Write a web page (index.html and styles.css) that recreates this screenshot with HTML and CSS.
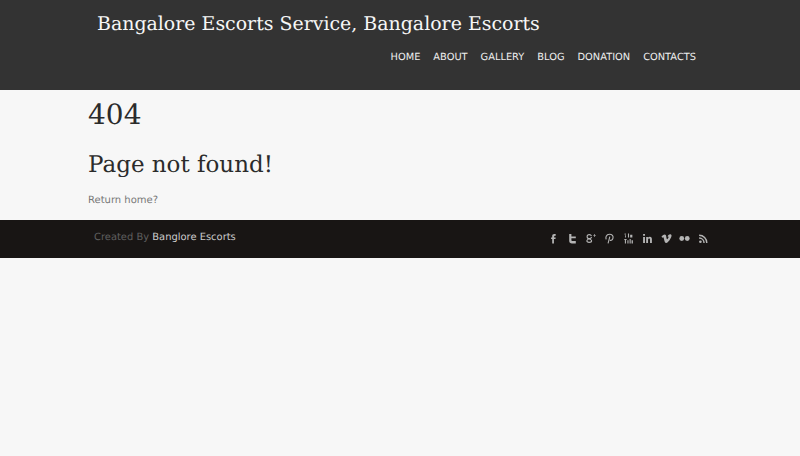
FILE: index.html
```html
<!DOCTYPE html>
<html lang="en">
<head>
    <meta charset="UTF-8">
    <title>Page not found</title>
    <link rel="stylesheet" href="styles.css">
</head>
<body>
    <header class="header">
        <div class="wrap">
            <div class="site-title">Bangalore Escorts Service, Bangalore Escorts</div>
            <nav class="nav">
                <a href="#">HOME</a>
                <a href="#">ABOUT</a>
                <a href="#">GALLERY</a>
                <a href="#">BLOG</a>
                <a href="#">DONATION</a>
                <a href="#">CONTACTS</a>
            </nav>
        </div>
    </header>

    <main class="wrap content">
        <h1>404</h1>
        <h2>Page not found!</h2>
        <p><a href="#">Return home?</a></p>
    </main>

    <footer class="footer">
        <div class="wrap footer-inner">
            <div class="credit">Created By <a href="#">Banglore Escorts</a></div>
            <div class="social">
                <svg viewBox="0 0 10 10"><path d="M3.800 9.500V5.500H2.800V4h1V3c0-1.300.7-2 1.900-2H7v1.500H6.200c-.4 0-.6.200-.6.600V4H7l-.2 1.500H5.400V9.500z"/></svg>
                <svg viewBox="0 0 10 10"><path d="M2 1h2v2.200h4v1.600H4v1.500c0 .7.300 1 1 1h3V9.500H4.500C2.900 9.500 2 8.600 2 7z"/></svg>
                <svg viewBox="0 0 10 10"><path class="line" d="M5 2.800C4.700 1.900 3.900 1.500 3 1.500 1.800 1.500 1 2.300 1 3.300s.8 1.800 2 1.800c1.300 0 2-.8 1.900-1.500M2.800 5.200c-.8.300-2 .9-2 1.900 0 1 1 1.400 2.100 1.400 1.200 0 2.200-.6 2.200-1.500 0-1-1.500-1.300-2.300-1.800"/><path d="M7.500 1h.6v1h1v.6h-1v1h-.6v-1h-1V2h1z"/></svg>
                <svg viewBox="0 0 10 10"><path class="line" d="M2.100 5.800C1.200 4.300 1.800 1.200 5 1.200c2.500 0 3.500 1.700 3.200 3.300C7.900 6.200 6.600 7 5.400 6.500M5.300 3.200L3.700 9.500"/></svg>
                <svg viewBox="0 0 10 10"><path d="M1.500 .5h1v1.200h-1zM1.800 2h.8v2h-.8zM4.500 .5h1v3.500h-1zM6.500 1.500h2V4h-2zM1 5.500h2.500v.7h-.8V9.500h-1V6.200H1zM4 6.500h1v3H4zM6 5.500h1v4H6zM7.800 6.500h1.200v3H7.800z"/></svg>
                <svg viewBox="0 0 10 10"><path d="M1 1h1.700v1.600H1zM1 3.600h1.700V9H1zM3.800 3.600h1.600v.8C5.800 3.800 6.400 3.400 7.200 3.400 8.500 3.400 9 4.300 9 5.600V9H7.300V6c0-.7-.2-1.100-.8-1.100S5.500 5.300 5.500 6v3H3.800z"/></svg>
                <svg viewBox="0 0 10 10"><path d="M.5 3C1.500 2.100 2.500 1.300 3.300 1.300c1 0 1.300.8 1.500 2 .2 1.200.4 2.300.8 2.300.4 0 1-.9 1.200-1.500.2-.7-.2-1-.9-.7C6.300 1.800 7.300 1 8.500 1.100c1 .1 1.300.9 1 1.900C9 5 6.500 9 4.800 9 3.500 9 3.200 7.500 2.800 5.800 2.500 4.600 2.300 3.800 2 3.800c-.2 0-.6.200-1 .5z"/></svg>
                <svg viewBox="0 0 10 10"><circle cx="2.500" cy="5" r="2.200"/><circle cx="7.500" cy="5" r="2.200"/></svg>
                <svg viewBox="0 0 10 10"><circle cx="2.200" cy="8" r="1.200"/><path class="line thick" d="M1 4.500C3.500 4.500 5.500 6.500 5.500 9M1 2C5 2 8 5 8 9"/></svg>
            </div>
        </div>
    </footer>
</body>
</html>
```

FILE: styles.css
```css
body {
    margin: 0;
    background-color: #f7f7f7;
    font-family: "DejaVu Sans", sans-serif;
    font-size: 10px;
    color: #777;
    text-rendering: geometricPrecision;
}
a {
    text-decoration: none;
    color: inherit;
}
.wrap {
    width: 624px;
    margin: 0 auto;
}
.header {
    height: 90px;
    background-color: #333;
}
.site-title {
    padding: 13px 0 0 9px;
    font-family: "DejaVu Serif", serif;
    font-size: 18.96px;
    line-height: 23px;
    color: #f7f7f7;
}
.nav {
    display: flex;
    justify-content: flex-end;
    gap: 13px;
    margin-top: 16px;
    padding-right: 16px;
    font-size: 9.84px;
    line-height: 12px;
    color: #eee;
}
.content {
    height: 130px;
}
h1, h2 {
    margin: 0;
    font-family: "DejaVu Serif", serif;
    font-weight: normal;
    color: #2b2b2b;
}
h1 {
    padding-top: 8px;
    font-size: 28px;
    line-height: 34px;
}
h2 {
    margin-top: 20px;
    font-size: 23px;
    line-height: 26px;
}
.content p {
    margin: 16px 0 0;
    line-height: 14px;
}
.footer {
    height: 38px;
    background-color: #181514;
}
.footer-inner {
    display: flex;
    justify-content: space-between;
}
.credit {
    padding: 11px 0 0 6px;
    font-size: 9.93px;
    line-height: 14px;
    color: #5f5f5f;
}
.credit a {
    color: #ccc;
}
.social {
    display: flex;
    gap: 7.75px;
    margin: 13px 3px 0 0;
}
.social svg {
    width: 11px;
    height: 11px;
    fill: #b4b4b4;
}
.social .line {
    fill: none;
    stroke: #b4b4b4;
    stroke-width: 1;
}
.social .thick {
    stroke-width: 1.3;
}
```
